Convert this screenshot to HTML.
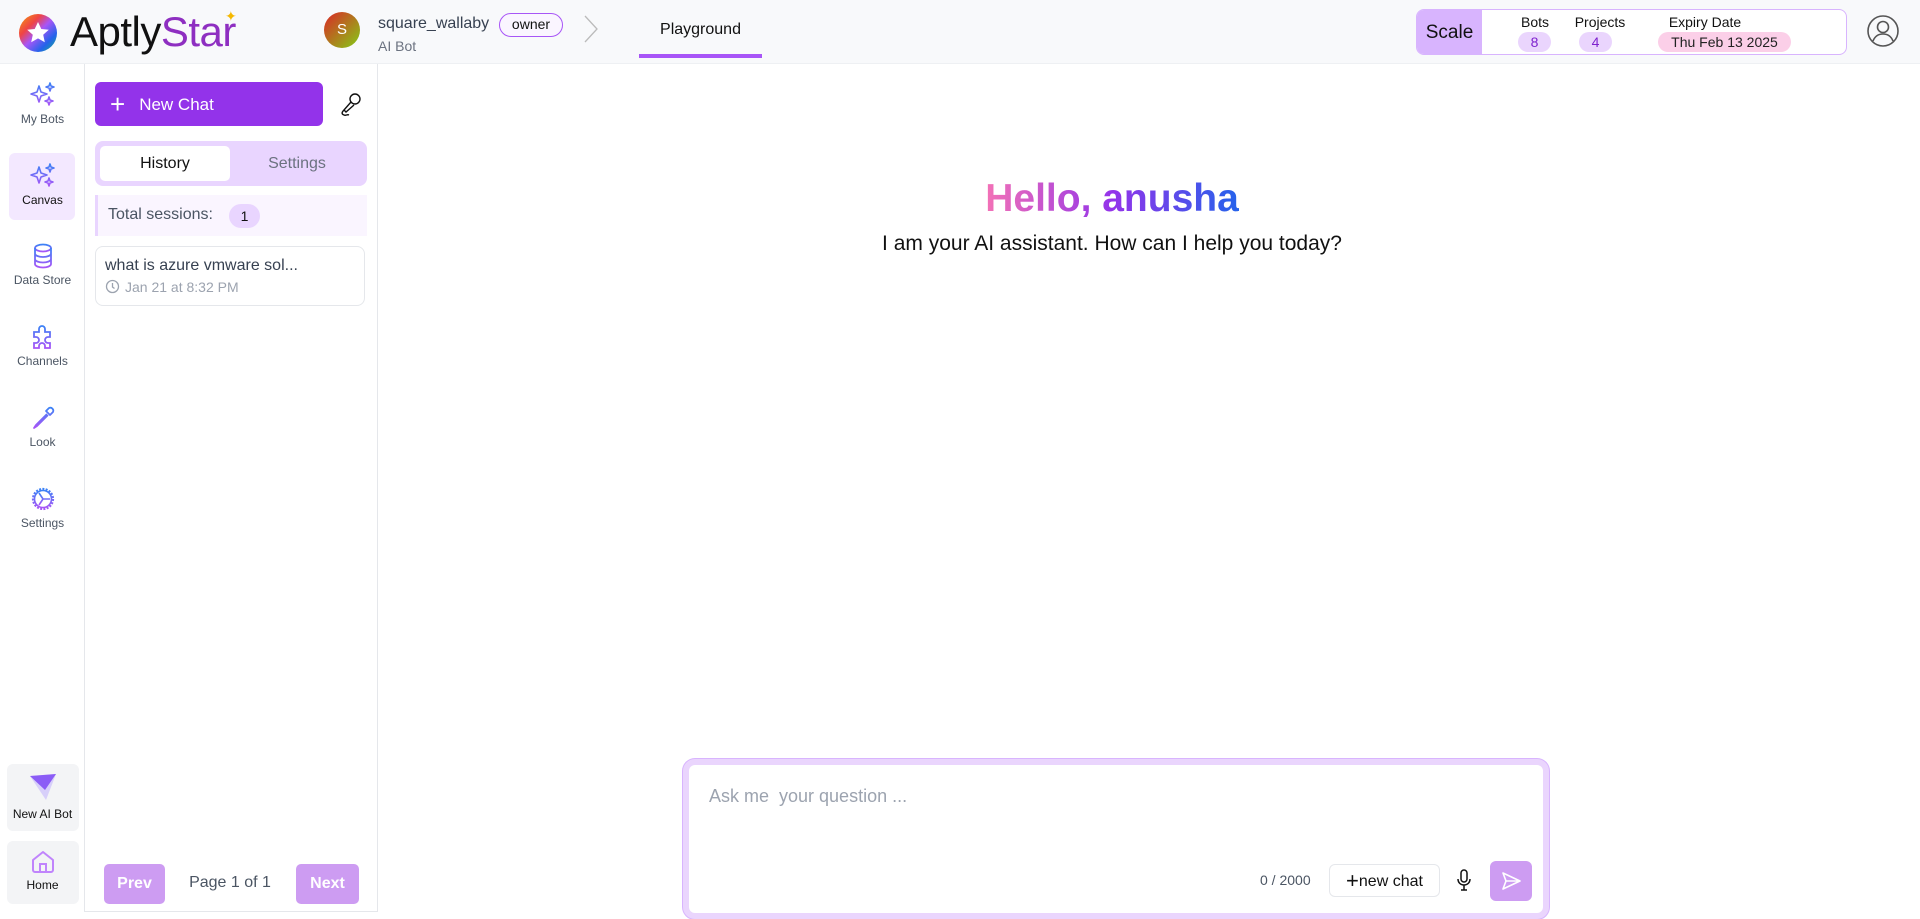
<!DOCTYPE html>
<html><head><meta charset="utf-8"><style>
*{box-sizing:border-box;margin:0;padding:0}
body{width:1920px;height:912px;overflow:hidden;background:#fff;font-family:"Liberation Sans",sans-serif;color:#111;position:relative}
.abs{position:absolute}
.hdr{left:0;top:0;width:1920px;height:64px;background:#f8f9fb;border-bottom:1px solid #eef0f3}
.rail{left:0;top:64px;width:85px;height:848px;background:#fff;border-right:1px solid #e5e7eb}
.ri{position:absolute;left:0;width:85px;text-align:center;font-size:12px;color:#4b5563}
.panel{left:85px;top:64px;width:293px;height:848px;border-right:1px solid #e5e7eb;border-bottom:1px solid #e5e7eb}
.lbl{font-size:14px;color:#111;text-align:center}
.badge{display:inline-block;border-radius:10px;background:#ead5fd;color:#7e22ce;font-size:14px;text-align:center;height:20px;line-height:20px}
</style></head><body>
<div class="abs hdr"></div>
<svg class="abs" style="left:17px;top:12px" width="42" height="42" viewBox="0 0 42 42">
<defs><linearGradient id="lg" x1="0" y1="0" x2="1" y2="1"><stop offset="0" stop-color="#f59e0b"/><stop offset=".3" stop-color="#ef4444"/><stop offset=".5" stop-color="#a855f7"/><stop offset=".75" stop-color="#2563eb"/><stop offset="1" stop-color="#10b981"/></linearGradient></defs>
<circle cx="21" cy="21" r="19" fill="url(#lg)"/>
<path d="M21 10l3.3 7 7.5.8-5.6 5 1.6 7.4L21 26.4l-6.8 3.8 1.6-7.4-5.6-5 7.5-.8z" fill="#fff"/>
</svg>
<div class="abs" style="left:70px;top:8px;font-size:42px;letter-spacing:-0.5px;line-height:48px"><span style="color:#111">Aptly</span><span style="color:#8e2fc1">Star</span></div>
<div class="abs" style="left:225px;top:8px;color:#f5b800;font-size:14px">✦</div>
<div class="abs" style="left:324px;top:12px;width:36px;height:36px;border-radius:50%;background:linear-gradient(135deg,#dc2626,#84cc16);color:#fff;font-size:15px;text-align:center;line-height:36px">S</div>
<div class="abs" style="left:378px;top:15px;font-size:16px;color:#374151">square_wallaby</div>
<div class="abs" style="left:499px;top:13px;width:64px;height:24px;border:1.5px solid #a855f7;border-radius:12px;font-size:14px;text-align:center;line-height:21px;background:#faf5ff">owner</div>
<div class="abs" style="left:378px;top:38px;font-size:14px;color:#6b7280">AI Bot</div>
<svg class="abs" style="left:582px;top:14px" width="18" height="30"><path d="M3 2l12 13L3 28" fill="none" stroke="#bbb" stroke-width="1.3"/></svg>
<div class="abs" style="left:639px;top:21px;width:123px;text-align:center;font-size:16px;color:#111">Playground</div>
<div class="abs" style="left:639px;top:54px;width:123px;height:4px;background:#a855f7"></div>
<div class="abs" style="left:1416px;top:9px;width:431px;height:46px;border:1px solid #d8b4fe;border-radius:8px;background:#fff;overflow:hidden">
<div style="position:absolute;left:0;top:0;width:65px;height:46px;background:#d8b4fe;font-size:19px;line-height:46px;text-align:center">Scale</div>
</div>
<div class="abs lbl" style="left:1515px;top:14px;width:40px">Bots</div>
<div class="abs badge" style="left:1518px;top:32px;width:33px">8</div>
<div class="abs lbl" style="left:1565px;top:14px;width:70px">Projects</div>
<div class="abs badge" style="left:1579px;top:32px;width:33px">4</div>
<div class="abs lbl" style="left:1640px;top:14px;width:130px">Expiry Date</div>
<div class="abs badge" style="left:1658px;top:32px;width:133px;background:#fbcfe8;color:#222">Thu Feb 13 2025</div>
<svg class="abs" style="left:1866px;top:14px" width="34" height="34" viewBox="0 0 34 34"><circle cx="17" cy="17" r="15" fill="none" stroke="#555" stroke-width="1.6"/><circle cx="17" cy="13" r="5.5" fill="none" stroke="#555" stroke-width="1.6"/><path d="M7 27c2-5 6-7 10-7s8 2 10 7" fill="none" stroke="#555" stroke-width="1.6"/></svg>

<div class="abs rail"></div>
<svg width="0" height="0" style="position:absolute"><defs><linearGradient id="ig" x1="0" y1="0" x2="0" y2="1"><stop offset="0" stop-color="#3b82f6"/><stop offset="1" stop-color="#a855f7"/></linearGradient></defs></svg>
<div class="ri" style="top:80px"><svg width="28" height="28" viewBox="0 0 28 28"><path d="M10 6l2 6 6 2-6 2-2 6-2-6-6-2 6-2zM21 3l1 3 3 1-3 1-1 3-1-3-3-1 3-1zM20 17l1 3 3 1-3 1-1 3-1-3-3-1 3-1z" fill="none" stroke="url(#ig)" stroke-width="1.6" stroke-linejoin="round"/></svg><div style="margin-top:1px">My Bots</div></div>
<div class="abs" style="left:9px;top:153px;width:66px;height:67px;background:#f3e8ff;border-radius:6px"></div>
<div class="ri" style="top:161px;color:#111"><svg width="28" height="28" viewBox="0 0 28 28"><path d="M10 6l2 6 6 2-6 2-2 6-2-6-6-2 6-2zM21 3l1 3 3 1-3 1-1 3-1-3-3-1 3-1zM20 17l1 3 3 1-3 1-1 3-1-3-3-1 3-1z" fill="none" stroke="url(#ig)" stroke-width="1.6" stroke-linejoin="round"/></svg><div style="margin-top:1px">Canvas</div></div>
<div class="ri" style="top:242px"><svg width="28" height="28" viewBox="0 0 28 28"><ellipse cx="14" cy="6" rx="8" ry="3.5" fill="none" stroke="url(#ig)" stroke-width="1.8"/><path d="M6 6v16c0 2 3.6 3.5 8 3.5s8-1.5 8-3.5V6M6 11.5c0 2 3.6 3.5 8 3.5s8-1.5 8-3.5M6 17c0 2 3.6 3.5 8 3.5s8-1.5 8-3.5" fill="none" stroke="url(#ig)" stroke-width="1.8"/></svg><div>Data Store</div></div>
<div class="ri" style="top:323px"><svg width="28" height="28" viewBox="0 0 28 28"><path d="M5 9h5V6a3 3 0 016 0v3h5v5h-2a3 3 0 000 6h2v5h-5v-2a3 3 0 00-6 0v2H5v-5h2a3 3 0 000-6H5z" fill="none" stroke="url(#ig)" stroke-width="1.8"/></svg><div>Channels</div></div>
<div class="ri" style="top:404px"><svg width="28" height="28" viewBox="0 0 28 28"><path d="M20 4a3 3 0 014 4l-3 3-4-4zM17 7l4 4M18 10L7 21l-2 3 3-2 11-11" fill="none" stroke="url(#ig)" stroke-width="1.8" stroke-linejoin="round"/></svg><div>Look</div></div>
<div class="ri" style="top:485px"><svg width="28" height="28" viewBox="0 0 28 28"><circle cx="14" cy="14" r="10" fill="none" stroke="url(#ig)" stroke-width="2.2" stroke-dasharray="2 1.3"/><circle cx="14" cy="14" r="8.5" fill="none" stroke="url(#ig)" stroke-width="1.6"/><path d="M14 14l7 0M14 14l-4-6M14 14l-4 6" stroke="url(#ig)" stroke-width="1.6"/></svg><div>Settings</div></div>
<div class="abs" style="left:7px;top:764px;width:72px;height:67px;background:#f3f4f6;border-radius:6px"></div>
<svg class="abs" style="left:28px;top:772px" width="30" height="30" viewBox="0 0 30 30"><path d="M2 4l26-2-10 26z" fill="#c4b5fd" opacity=".6"/><path d="M2 4l26-2-11 16z" fill="#8b5cf6"/></svg>
<div class="ri" style="top:807px;color:#111">New AI Bot</div>
<div class="abs" style="left:7px;top:841px;width:72px;height:63px;background:#f3f4f6;border-radius:6px"></div>
<svg class="abs" style="left:30px;top:849px" width="26" height="26" viewBox="0 0 26 26"><path d="M3 11L13 3l10 8v10a2 2 0 01-2 2H5a2 2 0 01-2-2z" fill="none" stroke="#c084fc" stroke-width="2" stroke-linejoin="round"/><path d="M10 23v-8h6v8" fill="none" stroke="#c084fc" stroke-width="2"/></svg>
<div class="ri" style="top:878px;color:#111">Home</div>

<div class="abs panel"></div>
<div class="abs" style="left:95px;top:82px;width:228px;height:44px;background:#9333ea;border-radius:6px;color:#fff;font-size:17px;line-height:44px"><span style="font-size:26px;font-weight:300;margin-left:15px;vertical-align:-3px">+</span><span style="margin-left:14px">New Chat</span></div>
<svg class="abs" style="left:338px;top:91px" width="26" height="26" viewBox="0 0 26 26"><circle cx="17" cy="8" r="5" fill="none" stroke="#111" stroke-width="1.4"/><path d="M13 11l-7 8 2 2 8-7M6 19c-2 2-3 4 0 5 2 1 3-1 5 0" fill="none" stroke="#111" stroke-width="1.4"/></svg>
<div class="abs" style="left:95px;top:141px;width:272px;height:45px;background:#e9d5ff;border-radius:8px"></div>
<div class="abs" style="left:100px;top:146px;width:130px;height:35px;background:#fff;border-radius:5px;text-align:center;line-height:35px;font-size:16px">History</div>
<div class="abs" style="left:232px;top:146px;width:130px;height:35px;text-align:center;line-height:35px;font-size:16px;color:#6b7280">Settings</div>
<div class="abs" style="left:95px;top:195px;width:272px;height:41px;background:#faf5ff;border-left:3px solid #e9d5ff"></div>
<div class="abs" style="left:108px;top:206px;font-size:16px;color:#4b5563">Total sessions:</div>
<div class="abs" style="left:229px;top:204px;width:31px;height:24px;border-radius:12px;background:#e9d5ff;text-align:center;line-height:24px;font-size:14px">1</div>
<div class="abs" style="left:95px;top:246px;width:270px;height:60px;border:1px solid #e5e7eb;border-radius:8px"></div>
<div class="abs" style="left:105px;top:257px;font-size:16px;color:#374151">what is azure vmware sol...</div>
<svg class="abs" style="left:105px;top:279px" width="15" height="15"><circle cx="7.5" cy="7.5" r="6" fill="none" stroke="#9ca3af" stroke-width="1.3"/><path d="M7.5 4v4l2 1.5" fill="none" stroke="#9ca3af" stroke-width="1.3"/></svg>
<div class="abs" style="left:125px;top:279px;font-size:14px;color:#9ca3af">Jan 21 at 8:32 PM</div>
<div class="abs" style="left:104px;top:864px;width:61px;height:40px;background:#cd9cf2;border-radius:5px;color:#fff;font-weight:bold;font-size:16px;text-align:center;line-height:40px">Prev</div>
<div class="abs" style="left:180px;top:874px;width:100px;text-align:center;font-size:16px;color:#4b5563">Page 1 of 1</div>
<div class="abs" style="left:296px;top:864px;width:63px;height:40px;background:#cd9cf2;border-radius:5px;color:#fff;font-weight:bold;font-size:16px;text-align:center;line-height:40px">Next</div>

<div class="abs" style="left:812px;top:175px;width:600px;text-align:center;font-size:39px;font-weight:bold;line-height:48px"><span style="background:linear-gradient(90deg,#f472b6,#9333ea 50%,#2563eb);-webkit-background-clip:text;background-clip:text;color:transparent">Hello, anusha</span></div>
<div class="abs" style="left:812px;top:232px;width:600px;text-align:center;font-size:21px;color:#111">I am your AI assistant. How can I help you today?</div>
<div class="abs" style="left:683px;top:759px;width:866px;height:160px;border:6px solid #ead5fd;border-radius:12px;background:#fff;box-shadow:0 0 0 1px #d8b4fe"></div>
<div class="abs" style="left:709px;top:786px;font-size:18px;color:#9ca3af">Ask me&nbsp; your question ...</div>
<div class="abs" style="left:1260px;top:872px;font-size:14px;color:#4b5563">0 / 2000</div>
<div class="abs" style="left:1329px;top:864px;width:111px;height:33px;border:1px solid #e5e7eb;border-radius:6px;font-size:16px;line-height:31px;text-align:center"><span style="font-size:22px;vertical-align:-2px">+</span>new chat</div>
<svg class="abs" style="left:1455px;top:868px" width="18" height="24" viewBox="0 0 18 24"><rect x="6" y="2" width="6" height="12" rx="3" fill="none" stroke="#111" stroke-width="1.5"/><path d="M3 11c0 4 3 6 6 6s6-2 6-6M9 17v5M6 22h6" fill="none" stroke="#111" stroke-width="1.5"/></svg>
<div class="abs" style="left:1490px;top:861px;width:42px;height:40px;background:#cd9cf2;border-radius:6px"></div>
<svg class="abs" style="left:1500px;top:870px" width="22" height="22" viewBox="0 0 22 22"><path d="M3 3l17 8-17 8 3-8zM6 11h14" fill="none" stroke="#fff" stroke-width="1.6" stroke-linejoin="round"/></svg>
</body></html>
